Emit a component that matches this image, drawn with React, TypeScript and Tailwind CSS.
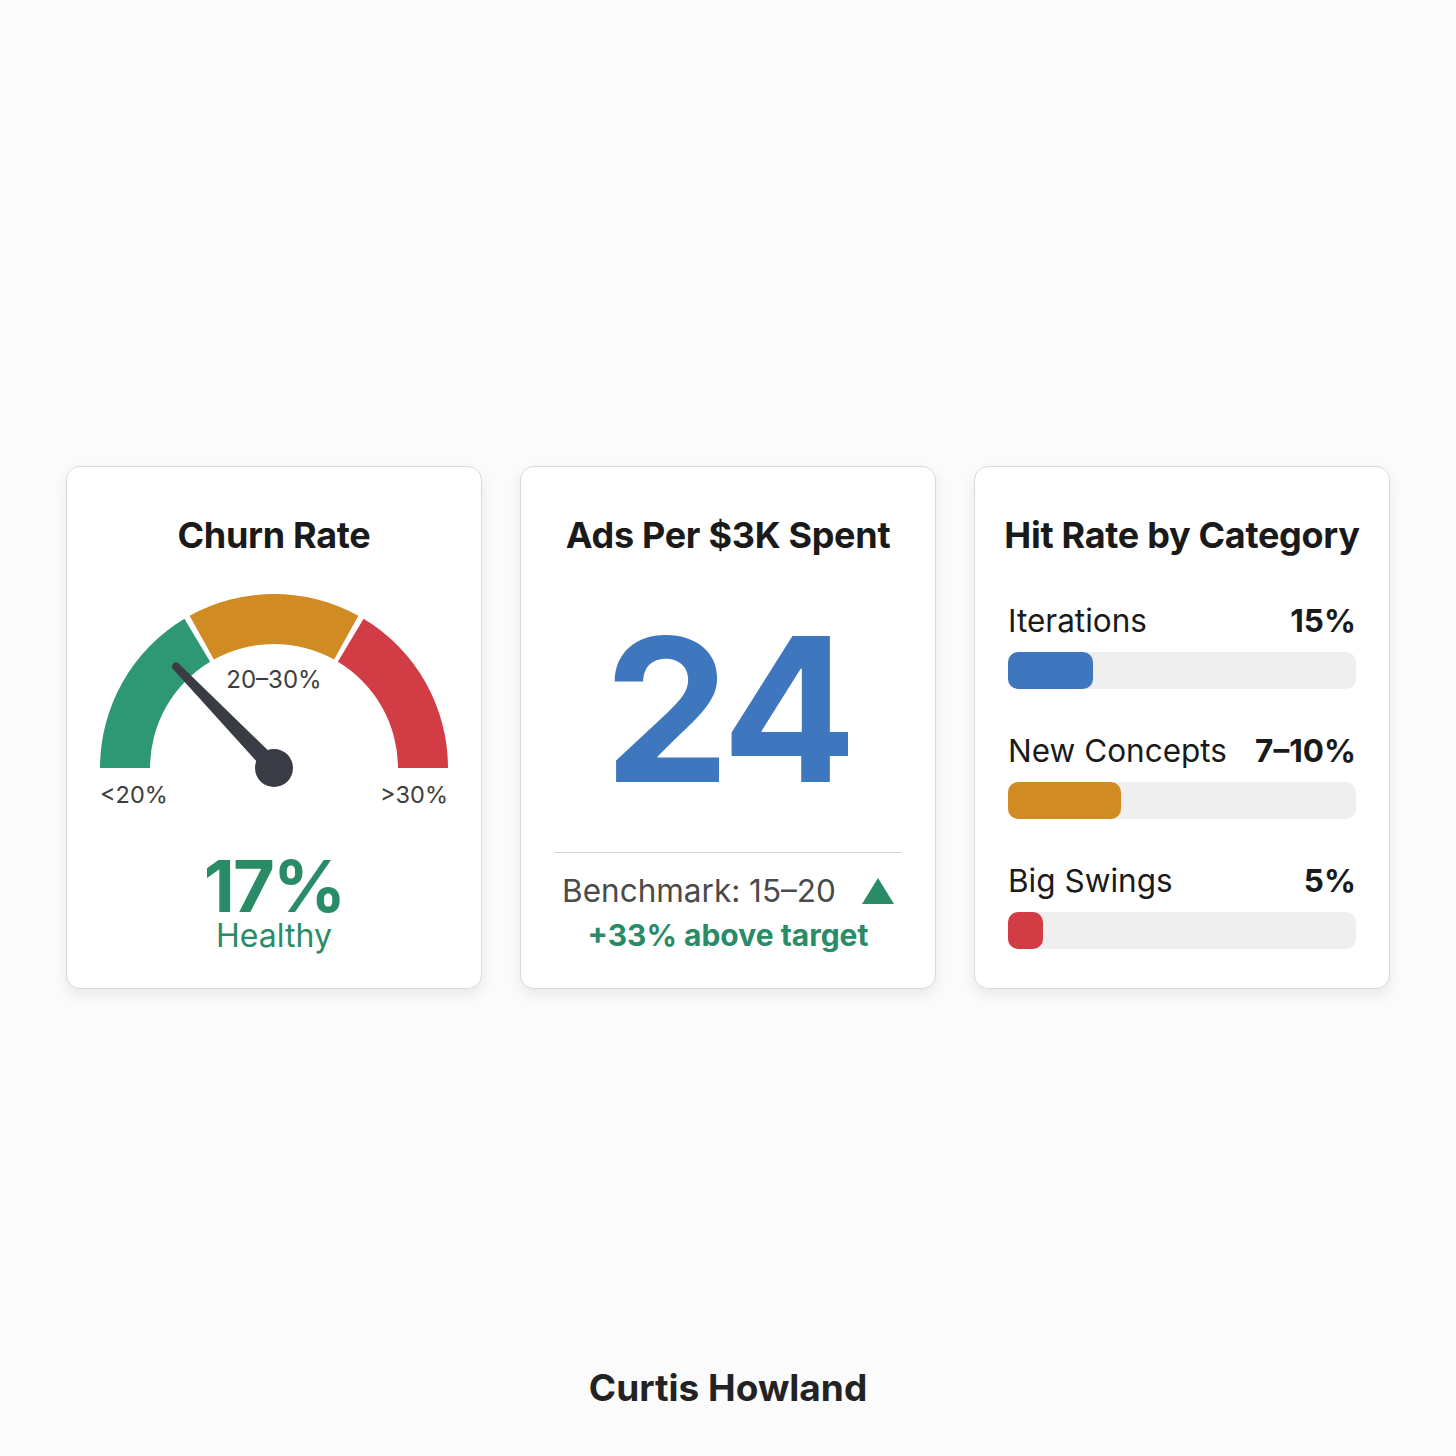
import React from "react";

const font = { fontFamily: "Inter, 'Noto Sans', sans-serif" };

// annular sector between two angles (degrees, 0 = right, counter-clockwise)
const sector = (cx: number, cy: number, r1: number, r2: number, a1: number, a2: number) => {
  const p = (r: number, a: number) => {
    const rad = (a * Math.PI) / 180;
    return `${(cx + r * Math.cos(rad)).toFixed(2)} ${(cy - r * Math.sin(rad)).toFixed(2)}`;
  };
  return `M ${p(r2, a1)} A ${r2} ${r2} 0 0 1 ${p(r2, a2)} L ${p(r1, a2)} A ${r1} ${r1} 0 0 0 ${p(r1, a1)} Z`;
};

const Gauge = () => {
  const cx = 180;
  const cy = 178;
  return (
    <svg width="360" height="220" viewBox="0 0 360 220" className="mt-[35px]">
      <path d={sector(cx, cy, 124, 174, 180, 121)} fill="#2d9873" />
      <path d={sector(cx, cy, 124, 174, 119, 61)} fill="#d08c23" />
      <path d={sector(cx, cy, 124, 174, 59, 0)} fill="#d23c44" />
      <text x="180" y="98" textAnchor="middle" fontSize="24" fill="#3d3d3d" fontFamily="Inter, sans-serif">
        20–30%
      </text>
      <g transform={`rotate(46 ${cx} ${cy})`}>
        <path d={`M ${cx} ${cy - 8.5} L ${cx - 141} ${cy - 4} A 4 4 0 0 0 ${cx - 141} ${cy + 4} L ${cx} ${cy + 8.5} Z`} fill="#3a3c45" />
      </g>
      <circle cx={cx} cy={cy} r="19" fill="#3a3c45" />
      <text x="6" y="213" fontSize="23.5" fill="#3d3d3d" fontFamily="Inter, sans-serif">
        &lt;20%
      </text>
      <text x="354" y="213" textAnchor="end" fontSize="23.5" fill="#3d3d3d" fontFamily="Inter, sans-serif">
        &gt;30%
      </text>
    </svg>
  );
};

const Card = ({ children }: { children: React.ReactNode }) => (
  <div className="w-[416px] h-[523px] rounded-[14px] border border-[#dadada] bg-white shadow-[0_6px_14px_rgba(0,0,0,0.08)] flex flex-col items-center">
    {children}
  </div>
);

const Title = ({ children }: { children: React.ReactNode }) => (
  <h2 className="mt-[48px] text-[36px] leading-[40px] font-bold text-[#1a1a1a] tracking-[-0.3px]">{children}</h2>
);

const bars = [
  { label: "Iterations", value: "15%", fill: 85, color: "bg-[#3f77bf]" },
  { label: "New Concepts", value: "7–10%", fill: 113, color: "bg-[#d08c23]" },
  { label: "Big Swings", value: "5%", fill: 35, color: "bg-[#d23c44]" },
];

export default function App() {
  return (
    <div className="min-h-[1456px] bg-[#fbfbfb] flex flex-col items-center pt-[466px]" style={font}>
      <div className="flex gap-[38px]">
        <Card>
          <Title>Churn Rate</Title>
          <Gauge />
          <div className="mt-[45px] text-[72px] leading-[62px] font-bold tracking-tight text-[#2a8b67]">17%</div>
          <div className="mt-px text-[32px] leading-[36px] text-[#2a8b67]">Healthy</div>
        </Card>

        <Card>
          <Title>Ads Per $3K Spent</Title>
          <div className="mt-[54px] text-[200px] leading-none font-bold tracking-tight text-[#3f77bf]">24</div>
          <div className="mt-[43px] h-px self-stretch mx-[33px] bg-[#d4d4d4]" />
          <div className="mt-[20px] flex items-center gap-[26px]">
            <span className="text-[31.5px] leading-[36px] text-[#4a4a4a]">Benchmark: 15–20</span>
            <svg width="32" height="26" viewBox="0 0 32 26">
              <polygon points="16,0 32,26 0,26" fill="#2a8b67" />
            </svg>
          </div>
          <div className="mt-[8px] text-[30px] leading-[36px] font-bold text-[#2a8b67]">+33% above target</div>
        </Card>

        <Card>
          <Title>Hit Rate by Category</Title>
          <div className="self-stretch px-[33px] mt-[47px] flex flex-col gap-[43px]">
            {bars.map((b) => (
              <div key={b.label}>
                <div className="flex justify-between items-baseline text-[31.5px] leading-[38px] text-[#1a1a1a]">
                  <span>{b.label}</span>
                  <span className="font-bold">{b.value}</span>
                </div>
                <div className="mt-[12px] h-[37px] rounded-[10px] bg-[#efefef]">
                  <div className={`h-full rounded-[10px] ${b.color}`} style={{ width: b.fill }} />
                </div>
              </div>
            ))}
          </div>
        </Card>
      </div>

      <div className="mt-auto pb-[48px] text-[37px] leading-[40px] font-bold text-[#232323]">Curtis Howland</div>
    </div>
  );
}
